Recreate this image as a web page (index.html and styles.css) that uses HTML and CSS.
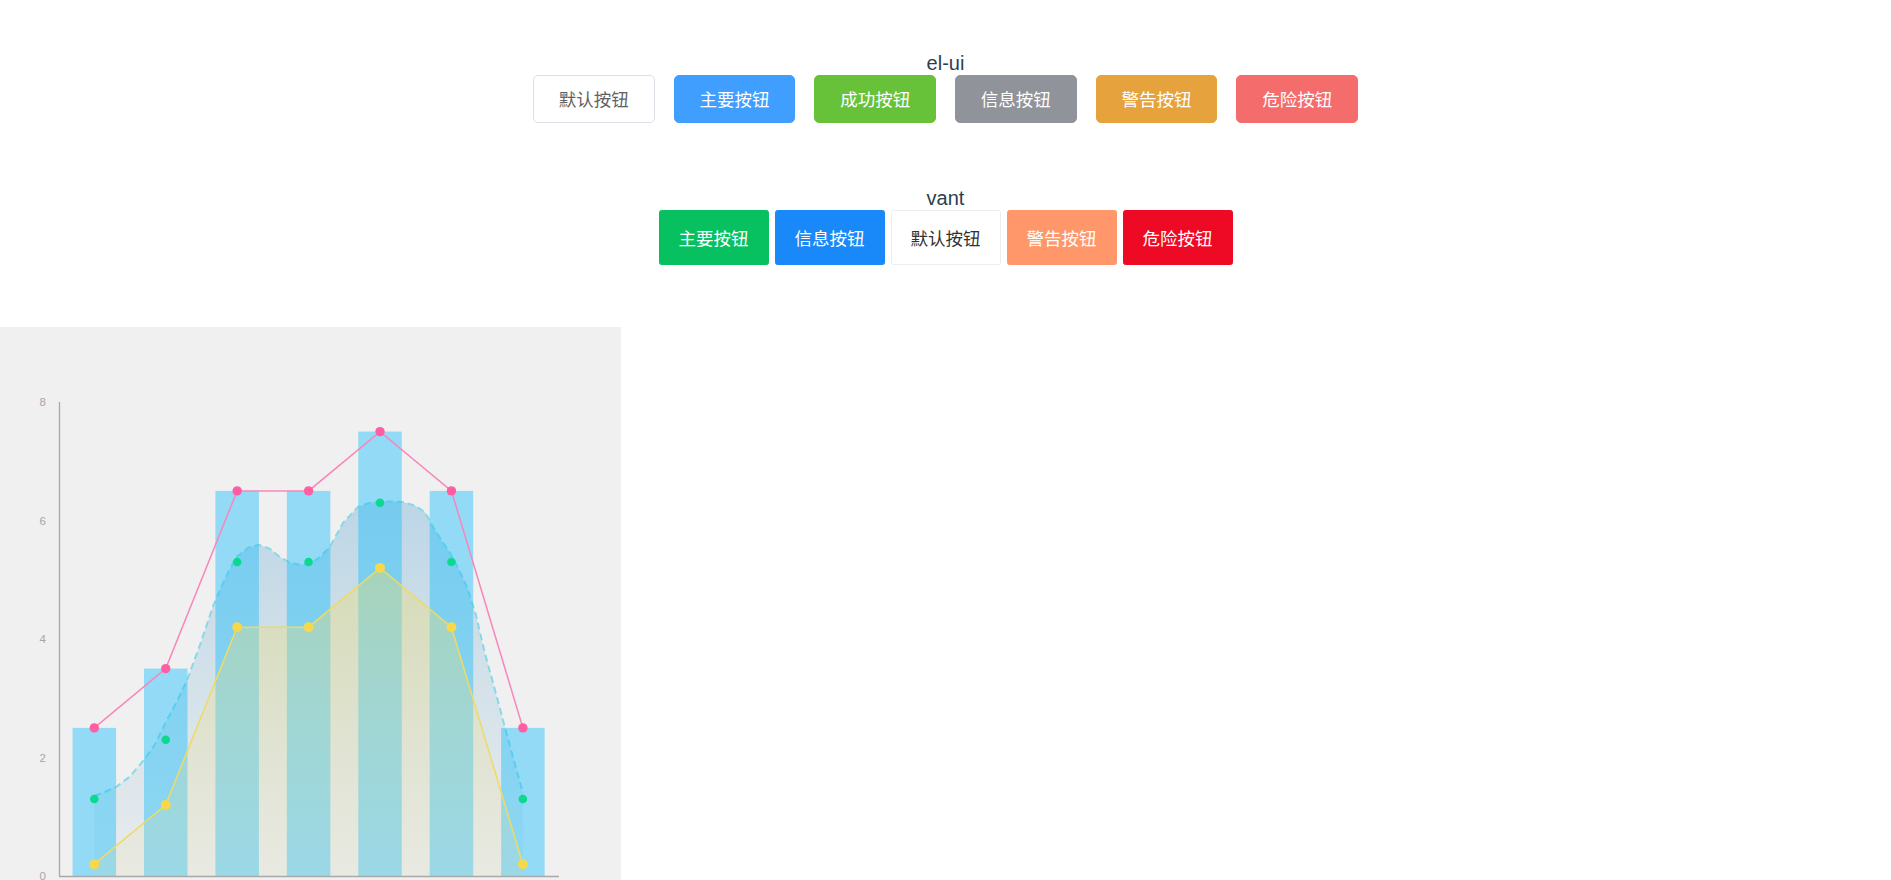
FILE: index.html
```html
<!DOCTYPE html>
<html lang="zh-CN">
<head>
<meta charset="utf-8">
<title>demo</title>
<link rel="stylesheet" href="styles.css">
</head>
<body>
<div class="app">
  <section class="demo">
    <div class="title">el-ui</div>
    <div class="row row-el">
      <button class="el-btn el-default">默认按钮</button>
      <button class="el-btn el-primary">主要按钮</button>
      <button class="el-btn el-success">成功按钮</button>
      <button class="el-btn el-info">信息按钮</button>
      <button class="el-btn el-warning">警告按钮</button>
      <button class="el-btn el-danger">危险按钮</button>
    </div>
  </section>
  <section class="demo demo-vant">
    <div class="title">vant</div>
    <div class="row row-vant">
      <button class="van-btn van-primary">主要按钮</button>
      <button class="van-btn van-info">信息按钮</button>
      <button class="van-btn van-default">默认按钮</button>
      <button class="van-btn van-warning">警告按钮</button>
      <button class="van-btn van-danger">危险按钮</button>
    </div>
  </section>
  <div class="chart">
    <svg class="chart-svg" width="621" height="553" viewBox="0 0 621 553">
      <defs>
        <linearGradient id="gArea" gradientUnits="userSpaceOnUse" x1="0" y1="175" x2="0" y2="549">
          <stop offset="0" stop-color="rgb(110,175,215)" stop-opacity="0.4"/>
          <stop offset="1" stop-color="rgb(150,190,215)" stop-opacity="0.1"/>
        </linearGradient>
        <linearGradient id="yArea" gradientUnits="userSpaceOnUse" x1="0" y1="240" x2="0" y2="549">
          <stop offset="0" stop-color="rgb(240,220,100)" stop-opacity="0.38"/>
          <stop offset="1" stop-color="rgb(240,225,150)" stop-opacity="0.14"/>
        </linearGradient>
      </defs>
      <g class="axis-labels">
        <text x="46" y="75">8</text>
        <text x="46" y="193.5">6</text>
        <text x="46" y="312">4</text>
        <text x="46" y="430.5">2</text>
        <text x="46" y="549">0</text>
      </g>
      <path class="g-area" d="M94.3,469 L105,464.9 L116,460.1 L130,449.5 L144,432.9 L155,417.5 L166,395 L177,374.2 L187,353.5 L200,317.9 L213,279.4 L220,262.8 L228,245.6 L237,229.6 L248,220.8 L259,217.8 L270,221.9 L280,230.2 L290,235.6 L300,237.9 L310,236.8 L320,230.2 L330,219.6 L343,195.9 L358,179.9 L370,175.7 L380,175.1 L392,174.5 L403,175.1 L415,178.7 L425,185.2 L433,200 L441,212.5 L450,226.1 L458,240.9 L467,259.9 L476,288.3 L485,326.8 L494,359.4 L503,393.2 L513,430.5 L522.9,466 L522.9,549 L94.3,549 Z"/>
      <path class="g-line" d="M94.3,469 L105,464.9 L116,460.1 L130,449.5 L144,432.9 L155,417.5 L166,395 L177,374.2 L187,353.5 L200,317.9 L213,279.4 L220,262.8 L228,245.6 L237,229.6 L248,220.8 L259,217.8 L270,221.9 L280,230.2 L290,235.6 L300,237.9 L310,236.8 L320,230.2 L330,219.6 L343,195.9 L358,179.9 L370,175.7 L380,175.1 L392,174.5 L403,175.1 L415,178.7 L425,185.2 L433,200 L441,212.5 L450,226.1 L458,240.9 L467,259.9 L476,288.3 L485,326.8 L494,359.4 L503,393.2 L513,430.5 L522.9,466"/>
      <g class="bars">
        <rect x="72.55" y="400.9" width="43.5" height="148.1"/>
        <rect x="143.98" y="341.6" width="43.5" height="207.4"/>
        <rect x="215.41" y="163.9" width="43.5" height="385.1"/>
        <rect x="286.84" y="163.9" width="43.5" height="385.1"/>
        <rect x="358.27" y="104.6" width="43.5" height="444.4"/>
        <rect x="429.7" y="163.9" width="43.5" height="385.1"/>
        <rect x="501.13" y="400.9" width="43.5" height="148.1"/>
      </g>
      <polygon class="y-area" points="94.3,537.2 165.73,477.9 237.16,300.2 308.59,300.2 380.02,240.9 451.45,300.2 522.88,537.2 522.88,549 94.3,549"/>
      <line class="axis" x1="59.5" y1="75" x2="59.5" y2="549.5"/>
      <line class="axis" x1="59" y1="549.5" x2="559" y2="549.5"/>
      <polyline class="p-line" points="94.3,400.9 165.73,341.6 237.16,163.9 308.59,163.9 380.02,104.6 451.45,163.9 522.88,400.9"/>
      <polyline class="y-line" points="94.3,537.2 165.73,477.9 237.16,300.2 308.59,300.2 380.02,240.9 451.45,300.2 522.88,537.2"/>
      <g class="p-dots">
        <circle cx="94.3" cy="400.9" r="4.7"/>
        <circle cx="165.73" cy="341.6" r="4.7"/>
        <circle cx="237.16" cy="163.9" r="4.7"/>
        <circle cx="308.59" cy="163.9" r="4.7"/>
        <circle cx="380.02" cy="104.6" r="4.7"/>
        <circle cx="451.45" cy="163.9" r="4.7"/>
        <circle cx="522.88" cy="400.9" r="4.7"/>
      </g>
      <g class="g-dots">
        <circle cx="94.3" cy="472" r="4.3"/>
        <circle cx="165.73" cy="412.7" r="4.3"/>
        <circle cx="237.16" cy="235" r="4.3"/>
        <circle cx="308.59" cy="235" r="4.3"/>
        <circle cx="380.02" cy="175.7" r="4.3"/>
        <circle cx="451.45" cy="235" r="4.3"/>
        <circle cx="522.88" cy="472" r="4.3"/>
      </g>
      <g class="y-dots">
        <circle cx="94.3" cy="537.2" r="5"/>
        <circle cx="165.73" cy="477.9" r="5"/>
        <circle cx="237.16" cy="300.2" r="5"/>
        <circle cx="308.59" cy="300.2" r="5"/>
        <circle cx="380.02" cy="240.9" r="5"/>
        <circle cx="451.45" cy="300.2" r="5"/>
        <circle cx="522.88" cy="537.2" r="5"/>
      </g>
    </svg>
  </div>
</div>
</body>
</html>
```

FILE: styles.css
```css
html, body {
  margin: 0;
  padding: 0;
  overflow: hidden;
  background: #fff;
}

.app {
  font-family: "Liberation Sans", Arial, sans-serif;
  color: #2c3e50;
  padding-top: 52px;
}

.title {
  font-size: 20px;
  line-height: 23px;
  text-align: center;
}

.row {
  display: flex;
  justify-content: center;
}

.row-el {
  gap: 19.2px;
}

.row-vant {
  gap: 6px;
}

.el-btn,
.van-btn {
  box-sizing: border-box;
  margin: 0;
  padding: 0;
  display: flex;
  align-items: center;
  justify-content: center;
  font-family: "Noto Sans CJK SC", "Liberation Sans", sans-serif;
  font-size: 17.5px;
  line-height: 1;
  color: #fff;
  border: 1px solid transparent;
  cursor: pointer;
}

.el-btn {
  width: 121.5px;
  height: 48px;
  border-radius: 5px;
}

.el-default { background: #fff; border-color: #dcdfe6; color: #606266; }
.el-primary { background: #409eff; border-color: #409eff; }
.el-success { background: #67c23a; border-color: #67c23a; }
.el-info { background: #909399; border-color: #909399; }
.el-warning { background: #e6a23c; border-color: #e6a23c; }
.el-danger { background: #f56c6c; border-color: #f56c6c; }

.demo-vant {
  margin-top: 64px;
}

.van-btn {
  width: 110px;
  height: 55px;
  border-radius: 2.5px;
}

.van-primary { background: #07c160; border-color: #07c160; }
.van-info { background: #1989fa; border-color: #1989fa; }
.van-default { background: #fff; border-color: #ebedf0; color: #323233; }
.van-warning { background: #ff976a; border-color: #ff976a; }
.van-danger { background: #ee0a24; border-color: #ee0a24; }

.chart {
  margin-top: 62px;
  width: 621px;
  height: 553px;
  background: #f0f0f0;
}

.chart-svg {
  display: block;
}

.axis-labels text {
  font-family: "Liberation Sans", Arial, sans-serif;
  font-size: 11.5px;
  fill: #a6a6a6;
  text-anchor: end;
  dominant-baseline: central;
}

.g-area { fill: url(#gArea); }
.g-line {
  fill: none;
  stroke: #88d9e6;
  stroke-width: 2;
  stroke-dasharray: 7 4;
}

.bars rect { fill: rgba(30, 190, 250, 0.45); }

.y-area { fill: url(#yArea); }

.axis {
  stroke: #a9a9a9;
  stroke-width: 1.3;
}

.p-line {
  fill: none;
  stroke: #f985ba;
  stroke-width: 1.5;
}

.y-line {
  fill: none;
  stroke: #f0da62;
  stroke-width: 1.5;
}

.p-dots circle { fill: #ff5ea2; }
.g-dots circle { fill: #0bd98e; }
.y-dots circle { fill: #f5d84c; }
```
